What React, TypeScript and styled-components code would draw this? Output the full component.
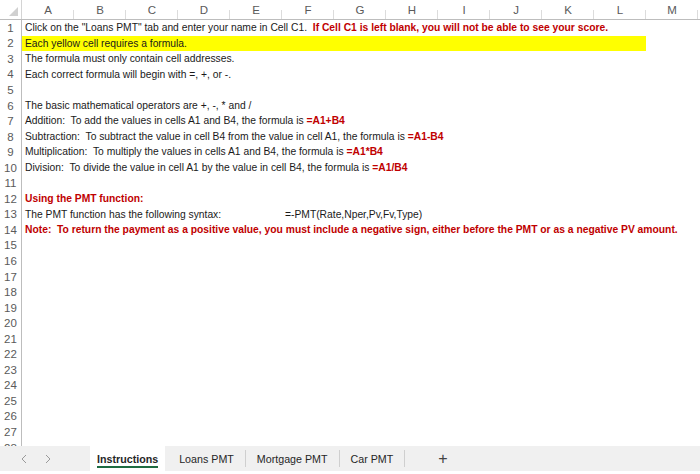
import React from 'react';
import styled, { createGlobalStyle } from 'styled-components';

const GlobalStyle = createGlobalStyle`
  html, body {
    margin: 0;
    padding: 0;
    background: #ffffff;
  }
  body {
    font-family: "Liberation Sans", Arial, sans-serif;
  }
`;

const COLS = ['A', 'B', 'C', 'D', 'E', 'F', 'G', 'H', 'I', 'J', 'K', 'L', 'M'];
const GRID = '22px repeat(13, 52px) 1fr';
const ROW_H = 15.55;

const Window = styled.div`
  width: 700px;
  height: 474px;
  display: flex;
  flex-direction: column;
  overflow: hidden;
  background: #ffffff;
`;

const Sheet = styled.div`
  flex: 1;
  display: flex;
  flex-direction: column;
  overflow: hidden;
`;

const HeaderRow = styled.div`
  display: grid;
  grid-template-columns: ${GRID};
  height: 20px;
  flex-shrink: 0;
  border-bottom: 1px solid #bdbdbd;
  box-sizing: border-box;
  background: #ffffff;
`;

const Corner = styled.div`
  display: flex;
  align-items: flex-end;
  justify-content: flex-end;
  padding: 0 3px 3px 0;
  border-right: 1px solid #d4d4d4;
`;

const ColHead = styled.div`
  display: flex;
  align-items: center;
  justify-content: center;
  font-size: 11.5px;
  color: #5a5a5a;
  position: relative;
  &::after {
    content: '';
    position: absolute;
    right: 0;
    bottom: 0;
    height: 9px;
    border-right: 1px solid #dcdcdc;
  }
`;

const Row = styled.div`
  display: grid;
  grid-template-columns: ${GRID};
  height: ${ROW_H}px;
  flex-shrink: 0;
`;

const RowNum = styled.div`
  display: flex;
  align-items: center;
  justify-content: center;
  font-size: 11.5px;
  color: #5a5a5a;
  border-right: 1px solid #bdbdbd;
`;

const Fill = styled.div<{ $span: string }>`
  grid-column: ${(p) => p.$span};
  grid-row: 1;
  background: #ffff00;
`;

const Cell = styled.div<{ $col: number }>`
  grid-column: ${(p) => p.$col};
  grid-row: 1;
  display: block;
  line-height: ${ROW_H}px;
  white-space: pre;
  overflow: visible;
  padding-left: 3px;
  font-size: 10.3px;
  color: #1a1a1a;
  z-index: 1;
`;

const Red = styled.span`
  color: #c00000;
  font-weight: bold;
`;

const TabBar = styled.div`
  height: 25px;
  margin-bottom: 3px;
  flex-shrink: 0;
  background: #f0f0f0;
  display: flex;
  align-items: stretch;
  font-size: 10.7px;
`;

const NavArrows = styled.div`
  width: 90px;
  display: flex;
  align-items: center;
  gap: 18px;
  padding-left: 21px;
  box-sizing: border-box;
`;

const Tab = styled.div<{ $active?: boolean }>`
  display: flex;
  align-items: center;
  padding: 0 ${(p) => (p.$active ? '7px' : '11px')};
  margin-right: ${(p) => (p.$active ? '3px' : '0')};
  color: #262626;
  font-weight: ${(p) => (p.$active ? 'bold' : 'normal')};
  background: ${(p) => (p.$active ? '#ffffff' : 'transparent')};
`;

const TabLabel = styled.span<{ $active?: boolean }>`
  padding-top: 3px;
  padding-bottom: 1px;
  border-bottom: 2px solid ${(p) => (p.$active ? '#1e6b41' : 'transparent')};
`;

const TabSep = styled.div`
  width: 1px;
  margin: 4px 0;
  background: #cfcfcf;
`;

const AddTab = styled.div`
  display: flex;
  align-items: center;
  padding-left: 33px;
  font-size: 16px;
  color: #444;
`;

const Chevron = ({ dir }: { dir: 'left' | 'right' }) => (
  <svg width="6" height="10" viewBox="0 0 6 10">
    <polyline
      points={dir === 'left' ? '5,1 1,5 5,9' : '1,1 5,5 1,9'}
      fill="none"
      stroke="#9a9a9a"
      strokeWidth="1"
    />
  </svg>
);

type Line = { col?: number; text: React.ReactNode }[];

const lines: Line[] = [
  [{ text: <>Click on the "Loans PMT" tab and enter your name in Cell C1.  <Red>If Cell C1 is left blank, you will not be able to see your score.</Red></> }],
  [{ text: 'Each yellow cell requires a formula.' }],
  [{ text: 'The formula must only contain cell addresses.' }],
  [{ text: 'Each correct formula will begin with =, +, or -.' }],
  [],
  [{ text: 'The basic mathematical operators are +, -, * and /' }],
  [{ text: <>Addition:  To add the values in cells A1 and B4, the formula is <Red>=A1+B4</Red></> }],
  [{ text: <>Subtraction:  To subtract the value in cell B4 from the value in cell A1, the formula is <Red>=A1-B4</Red></> }],
  [{ text: <>Multiplication:  To multiply the values in cells A1 and B4, the formula is <Red>=A1*B4</Red></> }],
  [{ text: <>Division:  To divide the value in cell A1 by the value in cell B4, the formula is <Red>=A1/B4</Red></> }],
  [],
  [{ text: <Red>Using the PMT function:</Red> }],
  [{ text: 'The PMT function has the following syntax:' }, { col: 7, text: '=-PMT(Rate,Nper,Pv,Fv,Type)' }],
  [{ text: <Red>Note:  To return the payment as a positive value, you must include a negative sign, either before the PMT or as a negative PV amount.</Red> }],
];

const ROWS = 28;

const App = () => {
  return (
    <Window>
      <GlobalStyle />
      <Sheet>
        <HeaderRow>
          <Corner>
            <svg width="9" height="9" viewBox="0 0 9 9">
              <polygon points="9,0 9,9 0,9" fill="#d0d0d0" />
            </svg>
          </Corner>
          {COLS.map((c) => (
            <ColHead key={c}>{c}</ColHead>
          ))}
        </HeaderRow>
        {Array.from({ length: ROWS }, (_, i) => {
          const line = lines[i] || [];
          return (
            <Row key={i}>
              <RowNum>{i + 1}</RowNum>
              {i === 1 && <Fill $span="2 / 14" />}
              {line.map((c, j) => (
                <Cell key={j} $col={c.col ?? 2}>
                  {c.text}
                </Cell>
              ))}
            </Row>
          );
        })}
      </Sheet>
      <TabBar>
        <NavArrows>
          <Chevron dir="left" />
          <Chevron dir="right" />
        </NavArrows>
        <Tab $active>
          <TabLabel $active>Instructions</TabLabel>
        </Tab>
        <Tab>
          <TabLabel>Loans PMT</TabLabel>
        </Tab>
        <TabSep />
        <Tab>
          <TabLabel>Mortgage PMT</TabLabel>
        </Tab>
        <TabSep />
        <Tab>
          <TabLabel>Car PMT</TabLabel>
        </Tab>
        <TabSep />
        <AddTab>+</AddTab>
      </TabBar>
    </Window>
  );
};

export default App;
